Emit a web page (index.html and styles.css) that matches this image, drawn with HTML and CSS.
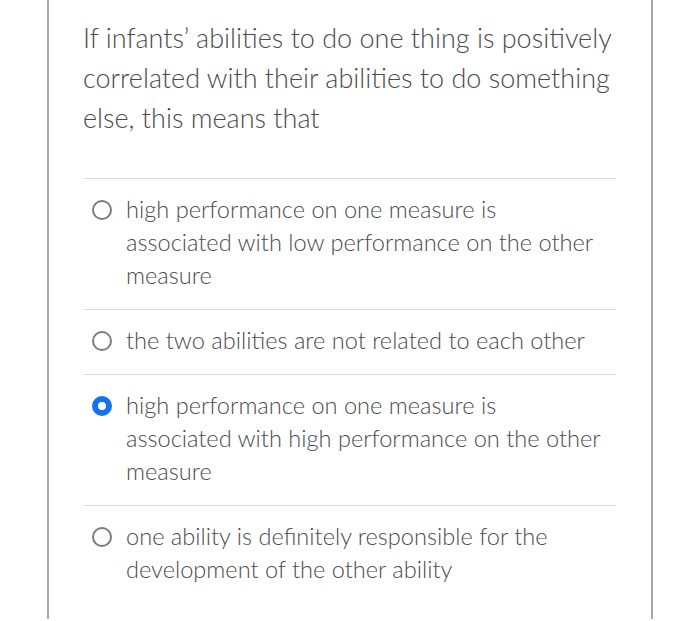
FILE: index.html
```html
<!DOCTYPE html>
<html>
<head>
<meta charset="utf-8">
<link rel="stylesheet" href="styles.css">
</head>
<body>
<div class="card">
  <div class="question">If infants’ abilities to do one thing is positively correlated with their abilities to do something else, this means that</div>
  <div class="options">
    <div class="option"><span class="radio"></span><span class="label">high performance on one measure is associated with low performance on the other measure</span></div>
    <div class="option"><span class="radio"></span><span class="label">the two abilities are not related to each other</span></div>
    <div class="option"><span class="radio checked"></span><span class="label">high performance on one measure is associated with high performance on the other measure</span></div>
    <div class="option"><span class="radio"></span><span class="label">one ability is definitely responsible for the development of the other ability</span></div>
  </div>
</div>
</body>
</html>
```
FILE: styles.css
```css
html, body {
  margin: 0;
  padding: 0;
  background: #fff;
}
body {
  font-family: Lato, "Open Sans", sans-serif;
  font-weight: 300;
  color: #4b4b4b;
}
.card {
  margin-left: 47px;
  width: 606px;
  height: 619px;
  border-left: 2px solid #a8a8a8;
  border-right: 2px solid #a8a8a8;
  padding: 18px 35px 0 34px;
  box-sizing: border-box;
}
.question {
  font-size: 27px;
  line-height: 40px;
  margin-bottom: 40px;
}
.options {
  border-top: 1px solid #dedede;
}
.option {
  display: flex;
  align-items: flex-start;
  padding: 14px 8px 17px 8px;
  border-bottom: 1px solid #dedede;
  font-size: 23.6px;
  line-height: 33px;
}
.option:last-child {
  border-bottom: none;
}
.radio {
  flex: none;
  width: 20px;
  height: 20px;
  box-sizing: border-box;
  border: 2px solid #7c7c7c;
  border-radius: 50%;
  margin-top: 7px;
  margin-left: 1px;
  margin-right: 14px;
}
.radio.checked {
  border: 6px solid #1571ee;
  background: #fff;
}
.label {
  flex: 1;
}
```
